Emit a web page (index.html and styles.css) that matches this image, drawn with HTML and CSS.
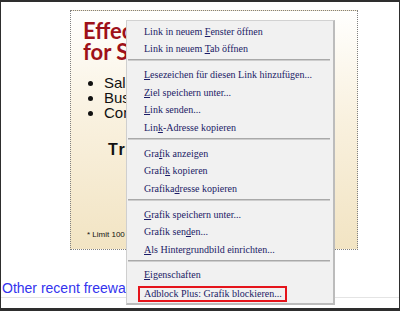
FILE: index.html
```html
<!DOCTYPE html>
<html>

<head>
    <title>Kontextmenü</title>
    <link rel="stylesheet" href="styles.css">
</head>

<body>
    <div class="frame">
        <div class="ad">
            <h1 class="ad-title">Effective Software<br>for Small Business</h1>
            <ul class="ad-list">
                <li>Sales Tracking</li>
                <li>Business Contacts</li>
                <li>Communication</li>
            </ul>
            <p class="ad-cta">Try it Free!</p>
            <p class="ad-note">* Limit 100 contacts in free version</p>
        </div>

        <div class="recent">
            <a href="#">Other recent freeware</a>
        </div>

        <!-- context menu lies over the page -->
        <div class="menu">
            <div class="menu-item">Link in neuem <u>F</u>enster öffnen</div>
            <div class="menu-item">Link in neuem <u>T</u>ab öffnen</div>
            <div class="menu-sep"></div>
            <div class="menu-item"><u>L</u>esezeichen für diesen Link hinzufügen...</div>
            <div class="menu-item"><u>Z</u>iel speichern unter...</div>
            <div class="menu-item"><u>L</u>ink senden...</div>
            <div class="menu-item">Lin<u>k</u>-Adresse kopieren</div>
            <div class="menu-sep"></div>
            <div class="menu-item">Gra<u>f</u>ik anzeigen</div>
            <div class="menu-item">Grafi<u>k</u> kopieren</div>
            <div class="menu-item">Grafika<u>d</u>resse kopieren</div>
            <div class="menu-sep"></div>
            <div class="menu-item"><u>G</u>rafik speichern unter...</div>
            <div class="menu-item">Grafik sen<u>d</u>en...</div>
            <div class="menu-item"><u>A</u>ls Hintergrundbild einrichten...</div>
            <div class="menu-sep"></div>
            <div class="menu-item"><u>E</u>igenschaften</div>
            <div class="menu-item menu-item-flagged"><span class="flag">Adblock Plus: Grafik blockieren...</span></div>
        </div>
    </div>
</body>

</html>
```

FILE: styles.css
```css
body {
    margin: 0;
    background-color: #ffffff;
}

.frame {
    position: relative;
    width: 400px;
    height: 311px;
    box-sizing: border-box;
    border-style: solid;
    border-color: #2e2e2e;
    border-width: 2px 1px 3px 1px;
    overflow: hidden;
    background-color: #ffffff;
}

/* advertisement box */
.ad {
    display: flex;
    flex-direction: column;
    width: 288px;
    height: 240px;
    box-sizing: border-box;
    margin-top: 8px;
    margin-left: 69px;
    padding-top: 9px;
    border: 1px dotted #808080;
    background: linear-gradient(to bottom, #fffffe 0%, #f9f1df 45%, #f2e4c3 100%);
    overflow: hidden;
}

.ad-title {
    margin: 0;
    padding-left: 12px;
    font-family: Lato, "Open Sans", sans-serif;
    font-weight: bold;
    font-size: 22px;
    line-height: 21px;
    color: #9e1119;
    white-space: nowrap;
}

.ad-list {
    margin: 13px 0 0 0;
    padding-left: 33px;
    font-family: "Liberation Sans", Arial, sans-serif;
    font-size: 15px;
    line-height: 15px;
    color: #111111;
}

.ad-cta {
    margin: 21px 0 0 0;
    padding-left: 37px;
    font-family: "Liberation Sans", Arial, sans-serif;
    font-weight: bold;
    font-size: 16px;
    line-height: 18px;
    letter-spacing: 1.5px;
    color: #111111;
    white-space: nowrap;
}

.ad-note {
    margin: auto 0 0 0;
    padding: 0 0 9px 16px;
    font-family: "Liberation Sans", Arial, sans-serif;
    font-size: 8px;
    line-height: 10px;
    color: #111111;
    white-space: nowrap;
}

/* link row under the ad */
.recent {
    margin-top: 30px;
    padding-left: 1px;
    padding-bottom: 1px;
    border-bottom: 1px solid #e4e4e4;
    font-family: "Liberation Sans", Arial, sans-serif;
    font-size: 14px;
    line-height: 16px;
}

.recent a {
    color: #3333ee;
    text-decoration: none;
}

/* context menu */
.menu {
    position: absolute;
    left: 125px;
    top: 18px;
    width: 209px;
    box-sizing: border-box;
    padding-bottom: 3px;
    background-color: #f1f1f1;
    border-style: solid;
    border-width: 1px 2px 2px 1px;
    border-color: #d2d2d2 #bcbcbc #bcbcbc #cfcfcf;
}

.menu-item {
    height: 17.67px;
    box-sizing: border-box;
    padding-top: 3.6px;
    padding-left: 17px;
    font-family: "Liberation Serif", "Times New Roman", serif;
    font-size: 10px;
    line-height: 14px;
    color: #1b1b66;
    white-space: nowrap;
}

.menu-item u {
    text-underline-offset: 1px;
}

.menu-sep {
    height: 2px;
    margin: 3px 3px 3px 1px;
    border-top: 1px solid #a9a9a9;
    border-bottom: 1px solid #cdcdcd;
    box-sizing: border-box;
}

.flag {
    display: inline-block;
    margin-left: -6px;
    padding: 0 3px 0 4px;
    border: 2px solid #e5141b;
    line-height: 12px;
}
```
